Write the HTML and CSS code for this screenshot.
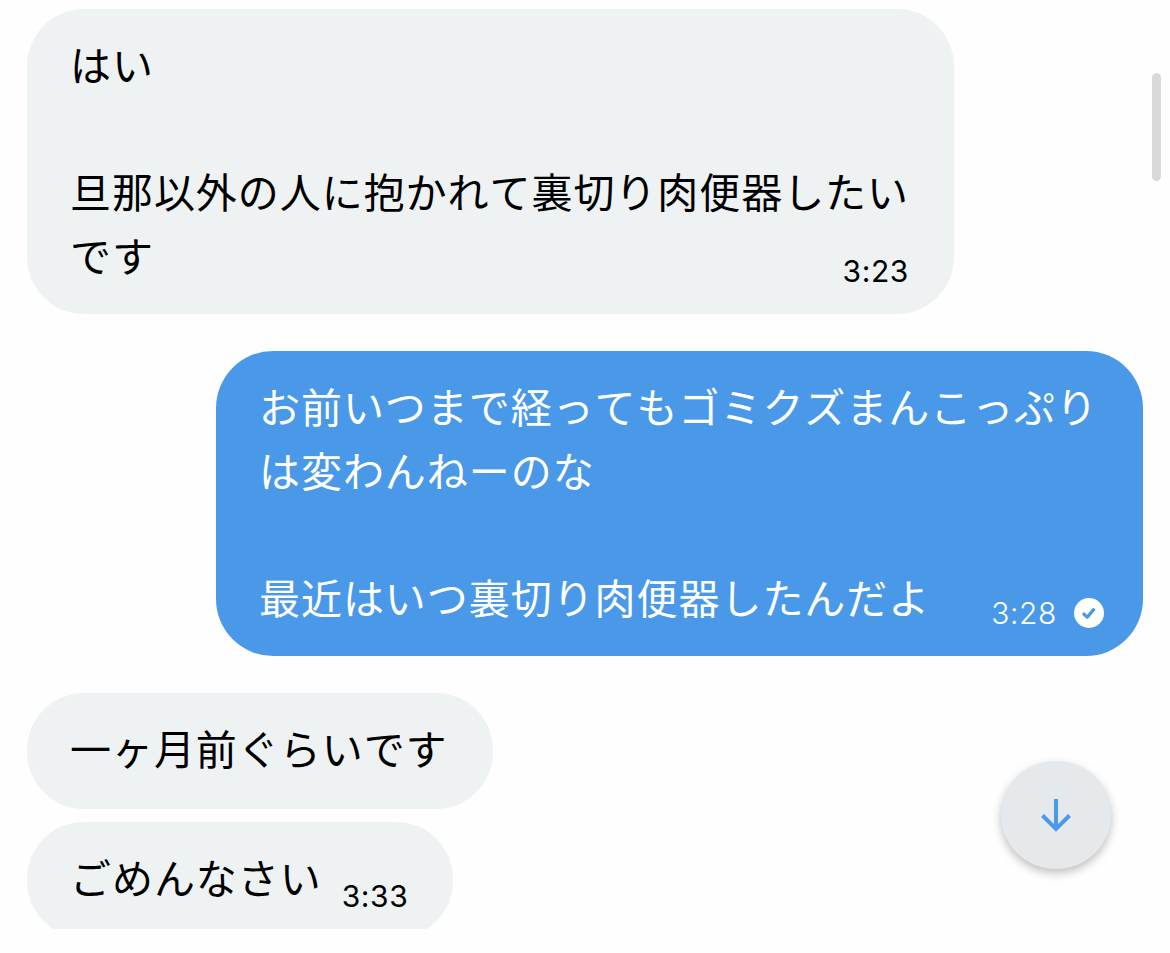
FILE: index.html
```
<!DOCTYPE html>
<html lang="ja">
<head>
    <meta charset="UTF-8">
    <meta name="viewport" content="width=device-width, initial-scale=1.0">
    <title>メッセージ</title>
    <link rel="stylesheet" href="styles.css">
</head>
<body>
    <main class="chat">
        <div class="bubble received wide">
            <p class="text">はい<br><br>旦那以外の人に抱かれて裏切り肉便器したい<br>です</p>
            <div class="meta"><time>3:23</time></div>
        </div>
        <div class="bubble sent wide">
            <p class="text">お前いつまで経ってもゴミクズまんこっぷり<br>は変わんねーのな<br><br>最近はいつ裏切り肉便器したんだよ</p>
            <div class="meta">
                <time>3:28</time>
                <svg class="check" viewBox="0 0 30 30">
                    <circle cx="15" cy="15" r="15" fill="#fff"/>
                    <path d="M9.8 16l3.4 3.2 6.4-7.6" fill="none" stroke="#4a99e9" stroke-width="3.2" stroke-linecap="round" stroke-linejoin="round"/>
                </svg>
            </div>
        </div>
        <div class="bubble received">
            <p class="text">一ヶ月前ぐらいです</p>
        </div>
        <div class="bubble received last">
            <p class="text">ごめんなさい</p>
            <div class="meta"><time>3:33</time></div>
        </div>
    </main>
    <div class="scrollbar"></div>
    <button class="scroll-down" aria-label="最新のメッセージへ">
        <svg viewBox="0 0 30 34">
            <path d="M15 1v30M1.5 17.5L15 31 28.5 17.5" fill="none" stroke="#4a99e9" stroke-width="4"/>
        </svg>
    </button>
</body>
</html>
```

FILE: styles.css
```
* {
    box-sizing: border-box;
}
body {
    margin: 0;
    background: #fefefe;
    color: #000;
    font-family: Inter, "Noto Sans CJK JP", sans-serif;
    overflow: hidden;
}
.chat {
    display: flex;
    flex-direction: column;
    align-items: flex-start;
    height: 929px;
    padding: 9px 27px 0;
    overflow: hidden; /* last message runs under the bottom edge */
}
.bubble {
    display: flex;
    flex-shrink: 0;
    min-height: 116px;
    padding: 23px 45px 0 43px;
    border-radius: 57px;
}
.wide {
    display: grid;
    width: 927px;
    height: 305px;
    margin-bottom: 37px;
}
.wide .text,
.wide .meta {
    grid-area: 1 / 1;
}
.received {
    background: #eef2f3;
}
.sent {
    align-self: flex-end;
    padding-right: 39px;
    background: #4a99e9;
    color: #fff;
}
.text {
    margin: 0;
    font-family: "Noto Sans CJK JP", sans-serif;
    font-size: 41px;
    font-kerning: none;
    line-height: 63.6px;
    letter-spacing: 0.95px;
    white-space: nowrap;
}
.meta {
    display: flex;
    align-items: center;
    align-self: end;
    justify-self: end;
    gap: 17px;
    height: 30px;
    margin-bottom: 28px;
    font-size: 30px;
    line-height: 32px;
    letter-spacing: 0.6px;
}
.sent .meta {
    font-weight: 300;
}
.check {
    width: 30px;
    height: 30px;
}
.last {
    margin-top: 13px;
}
.last .meta {
    margin-left: 20px;
    margin-bottom: 27px;
}
.scrollbar {
    position: absolute;
    top: 73px;
    right: 9px;
    width: 9px;
    height: 108px;
    border-radius: 5px;
    background: #d9d9d9;
}
.scroll-down {
    position: absolute;
    top: 761px;
    left: 1001px;
    display: flex;
    align-items: center;
    justify-content: center;
    width: 110px;
    height: 108px;
    padding: 0;
    border: none;
    border-radius: 50%;
    background: #e5e9ec;
    box-shadow: 0 4px 10px rgba(0, 0, 0, 0.25);
}
.scroll-down svg {
    width: 30px;
    height: 34px;
}
```
